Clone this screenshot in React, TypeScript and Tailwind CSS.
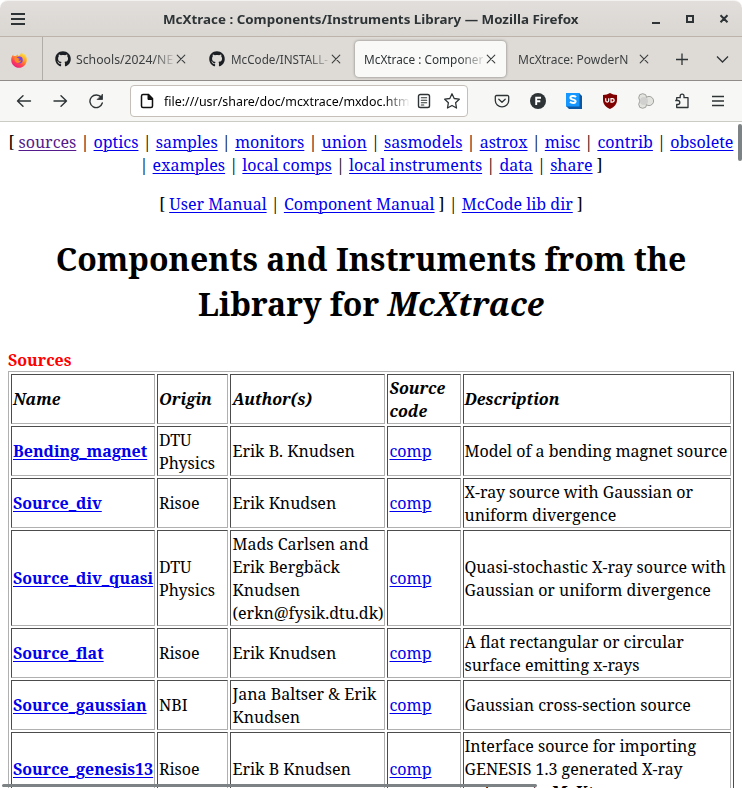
import React, { useLayoutEffect, useRef, useState } from "react";
import { FaGithub } from "react-icons/fa";

// One line of text, stretched horizontally to the given advance width.
function Fit({ w, className = "", children }: { w: number; className?: string; children: React.ReactNode }) {
  const ref = useRef<HTMLSpanElement>(null);
  const [scale, setScale] = useState(1);
  useLayoutEffect(() => {
    if (ref.current) setScale(w / ref.current.offsetWidth);
  }, [w]);
  return (
    <span className="inline-block whitespace-nowrap align-top" style={{ width: w }}>
      <span ref={ref} className={`inline-block origin-left ${className}`} style={{ transform: `scaleX(${scale})` }}>
        {children}
      </span>
    </span>
  );
}

const link = "text-[#0000ee] underline decoration-1 underline-offset-2";

function Links({ items }: { items: string[] }) {
  return (
    <>
      {items.map((label, i) => (
        <React.Fragment key={label}>
          {i > 0 && " | "}
          <a className={label === "sources" ? "text-[#551a8b] underline decoration-1 underline-offset-2" : link}>{label}</a>
        </React.Fragment>
      ))}
    </>
  );
}

type Row = { name: string; origin: string[]; authors: string[]; desc: string[] };

const rows: Row[] = [
  { name: "Bending_magnet", origin: ["DTU", "Physics"], authors: ["Erik B. Knudsen"], desc: ["Model of a bending magnet source"] },
  { name: "Source_div", origin: ["Risoe"], authors: ["Erik Knudsen"], desc: ["X-ray source with Gaussian or", "uniform divergence"] },
  { name: "Source_div_quasi", origin: ["DTU", "Physics"], authors: ["Mads Carlsen and", "Erik Bergbäck", "Knudsen", "(erkn@fysik.dtu.dk)"], desc: ["Quasi-stochastic X-ray source with", "Gaussian or uniform divergence"] },
  { name: "Source_flat", origin: ["Risoe"], authors: ["Erik Knudsen"], desc: ["A flat rectangular or circular", "surface emitting x-rays"] },
  { name: "Source_gaussian", origin: ["NBI"], authors: ["Jana Baltser & Erik", "Knudsen"], desc: ["Gaussian cross-section source"] },
  { name: "Source_genesis13", origin: ["Risoe"], authors: ["Erik B Knudsen"], desc: ["Interface source for importing", "GENESIS 1.3 generated X-ray"] },
];

const pads = ["pl-px", "pl-px", "pl-[1.5px]", "pl-[1.5px]", "pl-[0.5px]"];

function Cell({ col, low, children }: { col: number; low?: boolean; children: React.ReactNode }) {
  return (
    <td className={`border border-t-[#4c4c4c] border-l-[#4c4c4c] border-r-[#b0b0b0] border-b-[#b0b0b0] pr-0 text-left align-middle whitespace-nowrap ${pads[col]} ${low ? "pt-[2px] pb-0" : "py-px"}`}>
      {children}
    </td>
  );
}

function Lines({ lines }: { lines: string[] }) {
  return (
    <>
      {lines.map((t) => (
        <div key={t}>{t}</div>
      ))}
    </>
  );
}

function Close() {
  return (
    <svg className="size-4 shrink-0" viewBox="0 0 16 16" fill="none" stroke="#3b3f40" strokeWidth="1.1" strokeLinecap="round">
      <path d="M4.200 4.200l7.600 7.600M11.800 4.200l-7.600 7.600" />
    </svg>
  );
}

function Firefox() {
  return (
    <svg className="size-4" viewBox="0 0 16 16">
      <defs>
        <linearGradient id="flame" x1="0.85" y1="0" x2="0.2" y2="1">
          <stop offset="0" stopColor="#fff44f" />
          <stop offset=".4" stopColor="#ff9a1f" />
          <stop offset=".7" stopColor="#ff4055" />
          <stop offset="1" stopColor="#e31587" />
        </linearGradient>
      </defs>
      <path d="M10 .3c1.700 1 2.200 2 2.600 3 .3-.5.3-1 .2-1.600C15 3.400 16 5.800 15.800 8.200 15.500 12.500 12.100 15.800 8 15.800S.3 12.400.2 8.200C.1 6 .9 4 2.300 2.500c-.1.8 0 1.300.3 1.800.8-.4 1.500-.5 2.400-.3C5.500 3 6.200 2.500 7 2.200c-.2.9.1 1.500.9 1.900C9 3.300 9.900 2.100 10 .3z" fill="url(#flame)" />
      <circle cx="8.300" cy="8" r="3.400" fill="#7542e5" />
      <path d="M3.300 6.200c1.300-.9 2.600-.8 3.500-.2.600.4 1.400.6 2 .7-.2.800-.9 1-1.700 1.300.8.9 2.300.9 3.300.3-.7 1.700-2.100 2.800-3.500 2.600-2.300-.3-3.500-2.300-3.600-4.700z" fill="#ff8a22" />
    </svg>
  );
}

const fade = "[mask-image:linear-gradient(to_right,black_80%,transparent_104%)]";

export default function App() {
  return (
    <div className="relative flex h-[788px] w-[742px] flex-col overflow-hidden bg-white font-['Noto_Sans',sans-serif] text-[#2e3436]">
      <header className="flex h-[37px] shrink-0 items-center rounded-t-lg border-t border-b border-t-[#f4f2f0] border-b-[#bdb3ab] bg-gradient-to-b from-[#e1dedb] to-[#dad6d2] pl-[11px]">
        <svg className="h-3.5 w-3.5" viewBox="0 0 14 14"><path d="M0 2h14M0 7h14M0 12h14" stroke="#2e3436" strokeWidth="2" /></svg>
        <span className="ml-[138px] text-[13px] leading-[18px] font-bold"><Fit w={416}>McXtrace : Components/Instruments Library — Mozilla Firefox</Fit></span>
        <svg className="ml-[73px] h-[10px] w-[78px]" viewBox="0 0 78 10" fill="none" stroke="#2e3436" strokeWidth="2">
          <path d="M0 9h8M35 2h6v6h-6zM68.500 1.200l7 7M75.500 1.200l-7 7" />
        </svg>
      </header>

      <div className="flex h-[44px] shrink-0 items-center border-b border-[#8f8c89] bg-[#dedad6] text-[#3b3f40]">
        <div className="flex h-full w-[43px] items-center justify-center border-r border-[#b0aca8] pr-1 pt-0.5"><Firefox /></div>
        <div className="flex w-[154px] items-center pl-[12px]">
          <FaGithub className="size-4 shrink-0 text-[#1b1f23]" />
          <span className={`ml-[5px] h-[18px] w-[97px] overflow-hidden text-[13px] leading-[18px] ${fade}`}><Fit w={97}>Schools/2024/NE</Fit></span>
          <Close />
        </div>
        <div className="flex w-[158px] items-center pl-[12px]">
          <FaGithub className="size-4 shrink-0 text-[#1b1f23]" />
          <span className={`ml-[6px] h-[18px] w-[97px] overflow-hidden text-[13px] leading-[18px] ${fade}`}><Fit w={97}>McCode/INSTALL-</Fit></span>
          <Close />
        </div>
        <div className="flex h-9 w-[151px] items-center rounded bg-[#f9f9f7] pl-[9px] text-[#2e3436] shadow-[0_0_3px_rgba(0,0,0,0.45)]">
          <span className={`h-[18px] w-[119px] overflow-hidden text-[13px] leading-[18px] ${fade}`}><Fit w={119}>McXtrace : Componer</Fit></span>
          <Close />
        </div>
        <div className="ml-3 flex w-[156px] items-center">
          <span className="mr-[8px] w-[110px] text-[13px] leading-[18px]"><Fit w={110}>McXtrace: PowderN</Fit></span>
          <Close />
        </div>
        <svg className="h-3 w-[56px]" viewBox="0 0 56 12" fill="none" stroke="#2e3436" strokeWidth="1.3">
          <path d="M2 6.500h12M8 .5v12M43 3.500l5.500 5.500 5.500-5.500" />
        </svg>
      </div>

      <div className="flex h-[41px] shrink-0 items-center border-b border-[#ccccc6] bg-[#f7f7f5]">
        <svg className="h-4 w-[130px] shrink-0" viewBox="0 0 130 16" fill="none" stroke="#2e3436" strokeWidth="1.4" strokeLinecap="round" strokeLinejoin="round">
          <path d="M30.500 8H18M23 2.700L17.500 8l5.500 5.300" />
          <path d="M54 8h12.500M61 2.700L66.500 8 61 13.300" />
          <path d="M101.300 4.500a6.300 6.300 0 1 0 1 5.500" />
          <path d="M102.500 1.500v5h-5z" fill="#2e3436" strokeWidth=".8" />
        </svg>
        <div className="flex h-8 w-[338px] items-center rounded border border-[#c6bfb9] bg-white pl-[8px]">
          <svg className="size-[16px]" viewBox="0 0 16 16" fill="none" stroke="#111" strokeWidth="1.5"><path d="M9.500 1.600H4A1.500 1.500 0 0 0 2.500 3v10A1.500 1.500 0 0 0 4 14.500h8a1.500 1.500 0 0 0 1.500-1.500V5.600z" /><path d="M9 1.500v5h4.500z" fill="#111" strokeWidth="1" /></svg>
          <span className="ml-[9px] h-[20px] w-[246px] overflow-hidden text-[13.300px] leading-[20px] text-black [mask-image:linear-gradient(to_right,black_90%,transparent_100%)]"><Fit w={246}>file:///usr/share/doc/mcxtrace/mxdoc.htm</Fit></span>
          <svg className="ml-[6px] size-4" viewBox="0 0 16 16" fill="none" stroke="#2e3436" strokeWidth="1.400" strokeLinecap="round"><rect x="2.500" y="1.500" width="11" height="13" rx="1.800" /><path d="M5.300 4.700h5.400M5.300 7.300h5.400M5.300 9.700h5.400M5.300 12h2.500" strokeWidth="1.100" /></svg>
          <svg className="ml-[12px] size-4" viewBox="0 0 16 16" fill="none" stroke="#2e3436" strokeWidth="1.300" strokeLinejoin="round"><path d="M8 .8l2.200 4.700 5.100.7-3.700 3.500.9 5.300L8 12.500 3.500 15l.9-5.300L.7 6.200l5.100-.7z" /></svg>
        </div>
        <div className="ml-[26px] flex items-center gap-5">
          <svg className="size-4" viewBox="0 0 16 16" fill="none" stroke="#2e3436" strokeWidth="1.300" strokeLinecap="round" strokeLinejoin="round"><path d="M2.500 2.500h11a1.200 1.200 0 0 1 1.200 1.200V7.500a6.700 6.300 0 0 1-13.400 0V3.700a1.200 1.200 0 0 1 1.200-1.200zM4.800 6.300L8 9.300l3.200-3" /></svg>
          <svg className="size-4" viewBox="0 0 16 16"><circle cx="8" cy="8" r="8" fill="#2e3436" /><path d="M6.200 12V4.700h4.800M6.200 8.200h4.100" stroke="white" strokeWidth="1.900" fill="none" /></svg>
          <svg className="size-4" viewBox="0 0 16 16"><path d="M0 0h13l3 3v13H3l-3-3z" fill="#0b57a4" /><path d="M0 0h13.500v13.500H0z" fill="#1597ff" /><path d="M10 4.100C8.500 2.500 4.400 2.600 4.400 4.800c0 2.500 5.200 1.200 5.200 3.500 0 2.200-4 2.100-5.600.5" stroke="white" strokeWidth="2" fill="none" /></svg>
          <svg className="size-4" viewBox="0 0 16 16"><path d="M8 0c2 1.300 4.400 1.900 7 2v5c0 4.500-3 7-7 9-4-2-7-4.500-7-9V2c2.600-.1 5-.7 7-2z" fill="#800000" /><path d="M3.700 5.300v2.300q0 1.500 1.500 1.500T6.700 7.600V5.300M9 5.600v3.500h1.300q1.900 0 1.900-1.750T10.300 5.600z" stroke="white" strokeWidth="1.200" fill="none" /></svg>
          <svg className="size-4" viewBox="0 0 16 16" fill="#e2e2df" stroke="#8f8f8d" strokeWidth=".8"><circle cx="11" cy="8" r="4.600" /><circle cx="4.700" cy="4.700" r="4" /><circle cx="4.700" cy="11.300" r="4" /><circle cx="6" cy="8" r="4" fill="#d0d0ce" stroke="none" /></svg>
          <svg className="size-4" viewBox="0 0 16 16" fill="none" stroke="#2e3436" strokeWidth="1.300" strokeLinejoin="round"><path d="M2.700 7V4.700h3.500V3a1.900 1.900 0 0 1 3.800 0v1.700h4v9.800H2.700v-3h1.100a2 2 0 0 0 0-4H1.200" /></svg>
          <svg className="size-4" viewBox="0 0 16 16" stroke="#2e3436" strokeWidth="1.300"><path d="M2 3.500h12M2 8h12M2 12.500h12" /></svg>
        </div>
      </div>

      <main className="min-h-0 flex-1 overflow-hidden bg-white px-2 pt-[9px] font-['Noto_Serif','DejaVu_Serif_Condensed','DejaVu_Serif',serif] text-[16px] leading-[23px] text-black">
        <div className="text-center whitespace-nowrap">
          [ <Links items={["sources", "optics", "samples", "monitors", "union", "sasmodels", "astrox", "misc", "contrib", "obsolete"]} />
        </div>
        <div className="text-center whitespace-nowrap">
          | <Links items={["examples", "local comps", "local instruments", "data", "share"]} /> ]
        </div>
        <div className="mt-4 text-center whitespace-nowrap">
          [ <Links items={["User Manual", "Component Manual"]} /> ] | <Links items={["McCode lib dir"]} /> ]
        </div>
        <h1 className="mt-[20px] text-center text-[32px] leading-[45px] font-bold whitespace-nowrap">
          Components and Instruments from the<br />Library for <i>McXtrace</i>
        </h1>
        <div className="mt-[23px] h-[22px] font-bold text-[#ff0000]">Sources</div>
        <table className="w-[726px] table-fixed border-separate border-spacing-[2px] border border-t-[#b0b0b0] border-l-[#b0b0b0] border-r-[#4c4c4c] border-b-[#4c4c4c]">
          <colgroup>
            <col className="w-[144px]" /><col className="w-[71px]" /><col className="w-[155px]" /><col className="w-[74px]" /><col className="w-[268px]" />
          </colgroup>
          <tbody>
            <tr className="h-[50px] font-bold italic">
              <Cell col={0}>Name</Cell>
              <Cell col={1}>Origin</Cell>
              <Cell col={2}>Author(s)</Cell>
              <Cell col={3} low><Lines lines={["Source", "code"]} /></Cell>
              <Cell col={4}>Description</Cell>
            </tr>
            {rows.map((r, i) => (
              <tr key={r.name} className={i === 2 ? "h-[96px]" : i === 5 ? "h-[73px]" : "h-[50px]"}>
                <Cell col={0} low={i === 5}><a className={`font-bold ${link}`}>{r.name}</a></Cell>
                <Cell col={1} low={r.origin.length > 1 || i === 5}><Lines lines={r.origin} /></Cell>
                <Cell col={2} low={r.authors.length > 1 || i === 5}><Lines lines={r.authors} /></Cell>
                <Cell col={3} low={i === 5}><a className={link}>comp</a></Cell>
                <Cell col={4} low={r.desc.length > 1}>
                  <Lines lines={r.desc} />
                  {i === 5 && <div>pulses into <b><i>McXtrace</i></b></div>}
                </Cell>
              </tr>
            ))}
          </tbody>
        </table>
      </main>
      <div className="absolute top-[124px] right-0 h-[37px] w-[4px] rounded-full bg-[#7d8284]" />
      <div className="absolute top-[784px] left-[2px] h-[3px] w-[535px] rounded-full bg-[#7d8284]" />
    </div>
  );
}
